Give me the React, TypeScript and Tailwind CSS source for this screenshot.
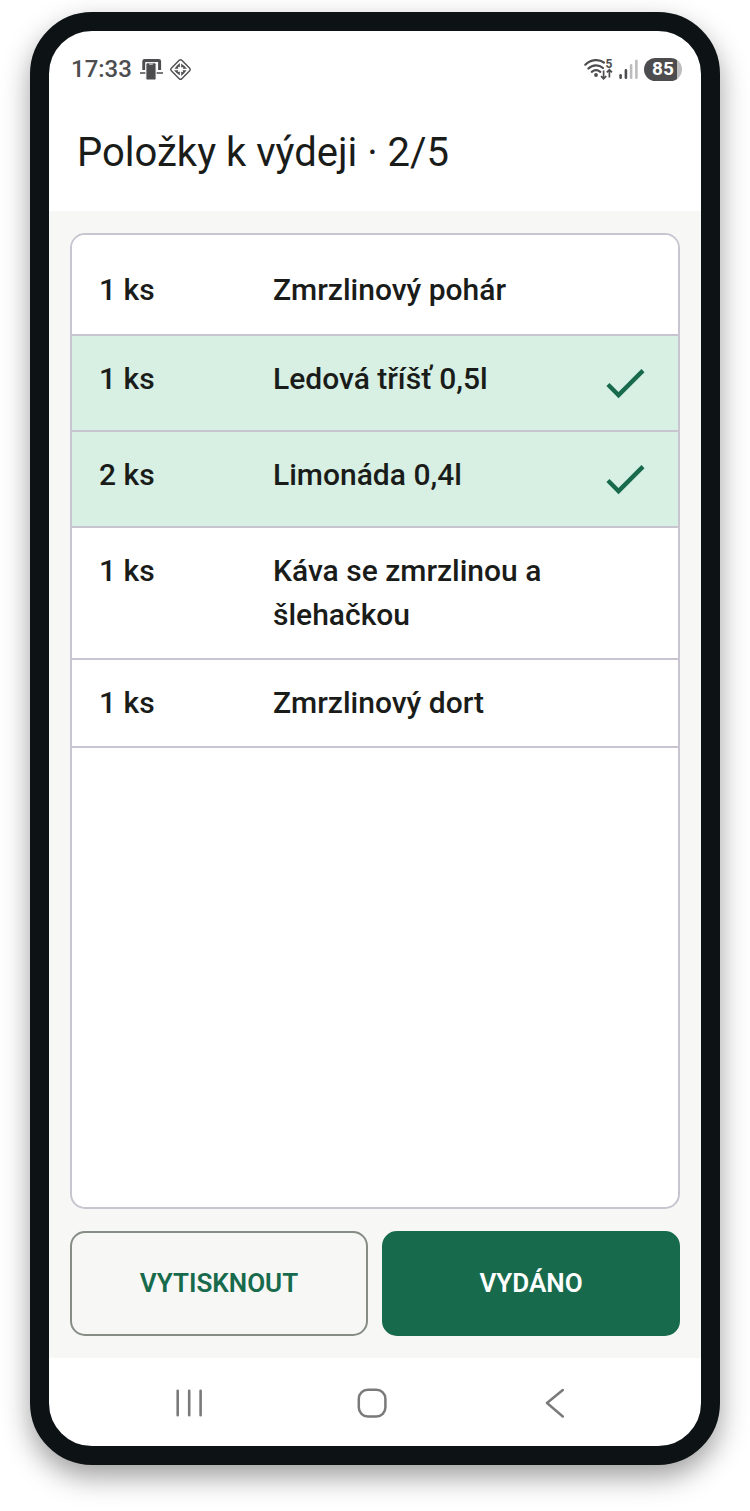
import React from 'react';

interface OrderItem {
  id: number;
  quantity: number;
  name: string;
  done: boolean;
}

const items: OrderItem[] = [
  { id: 1, quantity: 1, name: 'Zmrzlinový pohár', done: false },
  { id: 2, quantity: 1, name: 'Ledová tříšť 0,5l', done: true },
  { id: 3, quantity: 2, name: 'Limonáda 0,4l', done: true },
  { id: 4, quantity: 1, name: 'Káva se zmrzlinou a šlehačkou', done: false },
  { id: 5, quantity: 1, name: 'Zmrzlinový dort', done: false },
];

const DeviceIcon = () => (
  <svg width="23" height="23" viewBox="0 0 23 23" fill="none" aria-hidden="true">
    <path d="M3.8 12V3.2Q3.8 2.4 4.6 2.4H18.8Q19.6 2.4 19.6 3.2V12" stroke="#4d4d4f" strokeWidth="3" />
    <path d="M0 15H23" stroke="#4d4d4f" strokeWidth="1.6" />
    <rect x="5.9" y="4.8" width="10.2" height="17.2" rx="1.4" fill="#4d4d4f" stroke="#fff" strokeWidth="1" />
    <path d="M9.2 6.2H12.8" stroke="#d0d0d0" strokeWidth="1.2" />
  </svg>
);

const DiamondIcon = () => (
  <svg width="23" height="23" viewBox="0 0 23 23" fill="none" aria-hidden="true">
    <rect x="4.1" y="4.1" width="14.8" height="14.8" rx="1.8" transform="rotate(45 11.5 11.5)" stroke="#4d4d4f" strokeWidth="1.4" />
    <g fill="#4d4d4f">
      <path d="M10.8 5V9.2L7.4 8.2Z" />
      <path d="M12.2 5.4L15.8 8.4L12.2 9.4Z" />
      <path d="M18 10.8H13.8L14.8 7.4Z" />
      <path d="M17.6 12.2L14.6 15.8L13.6 12.2Z" />
      <path d="M12.2 18V13.8L15.6 14.8Z" />
      <path d="M10.8 17.6L7.2 14.6L10.8 13.6Z" />
      <path d="M5 12.2H9.2L8.2 15.6Z" />
      <path d="M5.4 10.8L8.4 7.2L9.4 10.8Z" />
    </g>
  </svg>
);

const WifiIcon = () => (
  <svg width="29" height="23" viewBox="0 0 29 23" fill="none" aria-hidden="true">
    <g stroke="#4d4d4f" strokeWidth="2.2" strokeLinecap="round">
      <path d="M1.3 6.7C7 0.9 15.5 0.9 20 4.6" />
      <path d="M4.4 10.5C8.8 6.3 14.8 6.3 19 10" />
      <path d="M7.8 13.8C10.3 11.7 13.8 11.7 16.3 13.8" />
    </g>
    <circle cx="12" cy="17" r="1.9" fill="#4d4d4f" />
    <path d="M19.6 12.4V20.6M17 18.2L19.6 20.8L22.2 18.2" stroke="#4d4d4f" strokeWidth="1.7" />
    <path d="M25.4 19.6V12M22.8 14.4L25.4 11.8L28 14.4" stroke="#4d4d4f" strokeWidth="1.7" />
    <text x="21.6" y="9.6" fontSize="12" fontWeight="700" fontFamily="Roboto, sans-serif" fill="#4d4d4f">5</text>
  </svg>
);

const SignalIcon = () => (
  <svg width="19" height="21" viewBox="0 0 19 21" fill="none" strokeWidth="2.6" strokeLinecap="round" aria-hidden="true">
    <path d="M1.6 16.2V18.8" stroke="#4d4d4f" />
    <path d="M6.9 11.4V18.8" stroke="#4d4d4f" />
    <path d="M12.1 6.4V18.8" stroke="#bdbdbf" />
    <path d="M17.4 1.8V18.8" stroke="#bdbdbf" />
  </svg>
);

const CheckIcon = () => (
  <svg width="52" height="52" viewBox="0 0 24 24" fill="#176b4c" role="img" aria-label="Vydáno" className="shrink-0">
    <path d="M9 16.17L4.83 12L3.41 13.41L9 19L21 7L19.59 5.59Z" />
  </svg>
);

const StatusBar: React.FC = () => (
  <div className="flex h-[76px] items-center justify-between pl-[22px] pr-[19px] text-[#4d4d4f]">
    <div className="flex items-center gap-2">
      <span className="text-2xl font-medium">17:33</span>
      <span className="flex items-center gap-[6px]">
        <DeviceIcon />
        <DiamondIcon />
      </span>
    </div>
    <div className="flex items-center gap-[6px]">
      <WifiIcon />
      <SignalIcon />
      <div className="flex h-[23px] w-[38px] items-center justify-center rounded-full bg-linear-to-r from-[#4d4d4f] from-86% to-[#bdbdbf] to-86% text-[19px] font-bold text-white">
        85
      </div>
    </div>
  </div>
);

const ItemRow: React.FC<{ item: OrderItem }> = ({ item }) => (
  <li
    className={`flex border-b-2 border-[#c8c5d0] px-[27px] py-[21px] first:pt-[33px] first:pb-[22px] ${
      item.done ? 'bg-[#d7f0e3]' : 'bg-white'
    }`}
  >
    <span className="w-[174px] shrink-0">{item.quantity} ks</span>
    <span className="min-w-0 flex-1 pr-2">{item.name}</span>
    {item.done ? <CheckIcon /> : <span className="w-[52px] shrink-0" />}
  </li>
);

const NavBar: React.FC = () => (
  <nav className="grid h-[88px] grid-cols-3 place-items-center pt-[2px] pr-[54px] pl-12">
    <button type="button" aria-label="Poslední aplikace">
      <svg width="30" height="30" viewBox="0 0 30 30" fill="none" stroke="#7a7a7a" strokeWidth="2.6" strokeLinecap="round">
        <path d="M3.7 2.7V27.3M15.2 2.7V27.3M26.6 2.7V27.3" />
      </svg>
    </button>
    <button type="button" aria-label="Domů">
      <svg width="30" height="30" viewBox="0 0 30 30" fill="none" stroke="#7a7a7a" strokeWidth="2.5">
        <rect x="1.8" y="1.8" width="26.6" height="26.6" rx="9" />
      </svg>
    </button>
    <button type="button" aria-label="Zpět">
      <svg width="20" height="30" viewBox="0 0 20 30" fill="none" stroke="#7a7a7a" strokeWidth="2.5" strokeLinecap="round" strokeLinejoin="round">
        <path d="M17.8 2L2 15L17.8 28.5" />
      </svg>
    </button>
  </nav>
);

const App: React.FC = () => {
  const doneCount = items.filter((item) => item.done).length;

  return (
    <div className="flex min-h-screen flex-col bg-white px-[30px] pt-3 pb-[46px] font-[Roboto,sans-serif] text-[#1a1c1a]">
      <div className="flex flex-1 flex-col overflow-hidden rounded-[62px] border-[19px] border-[#0d1214] bg-white shadow-[0_12px_28px_rgba(0,0,0,0.38)]">
        <header>
          <StatusBar />
          <h1 className="px-7 pt-[22px] pb-[34px] text-[40px] leading-[48px]">
            Položky k výdeji · {doneCount}/{items.length}
          </h1>
        </header>

        <main className="flex flex-1 flex-col gap-[22px] bg-[#f7f7f5] px-[21px] py-[22px]">
          <ul className="flex-1 overflow-hidden rounded-[15px] border-2 border-[#c8c5d0] bg-white text-[30px] leading-[44px] font-medium">
            {items.map((item) => (
              <ItemRow key={item.id} item={item} />
            ))}
          </ul>

          <div className="grid grid-cols-2 gap-[14px] text-[26px] leading-[35px] font-semibold">
            <button type="button" className="rounded-[15px] border-2 border-[#858d85] py-[33px] text-[#176b4c]">
              VYTISKNOUT
            </button>
            <button type="button" className="rounded-[15px] border-2 border-[#176b4c] bg-[#176b4c] py-[33px] text-white">
              VYDÁNO
            </button>
          </div>
        </main>

        <NavBar />
      </div>
    </div>
  );
};

export default App;
